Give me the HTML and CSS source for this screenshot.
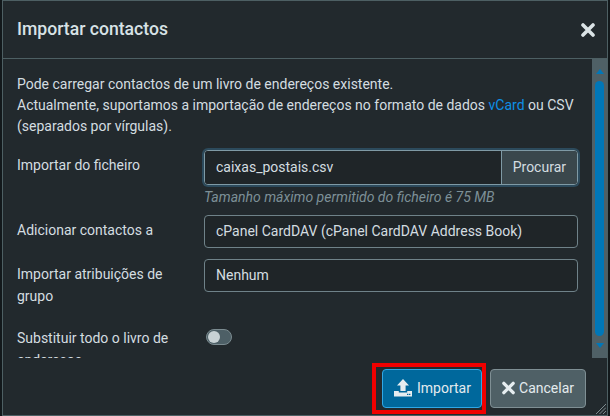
FILE: index.html
```html
<!DOCTYPE html>
<html>
<head>
<meta charset="utf-8">
<title>Importar contactos</title>
<link rel="stylesheet" href="styles.css">
</head>
<body>

<div class="dialog">
    <div class="titlebar">
        <span class="title">Importar contactos</span>
        <svg class="close" width="14" height="14" viewBox="0 0 14 14"><path d="M2 2 L12 12 M12 2 L2 12" stroke="#dbe3e6" stroke-width="3.6" stroke-linecap="round"/></svg>
    </div>

    <div class="middle">
        <div class="content">
            <p class="intro">Pode carregar contactos de um livro de endereços existente.<br>Actualmente, suportamos a importação de endereços no formato de dados <a href="#">vCard</a> ou CSV (separados por vírgulas).</p>

            <div class="row row-file">
                <label>Importar do ficheiro</label>
                <div class="field">
                    <div class="filebox">
                        <span class="filename">caixas_postais.csv</span>
                        <span class="browse">Procurar</span>
                    </div>
                    <div class="hint">Tamanho máximo permitido do ficheiro é 75 MB</div>
                </div>
            </div>

            <div class="row row-book">
                <label>Adicionar contactos a</label>
                <div class="field"><div class="select">cPanel CardDAV (cPanel CardDAV Address Book)</div></div>
            </div>

            <div class="row row-group">
                <label>Importar atribuições de grupo</label>
                <div class="field"><div class="select">Nenhum</div></div>
            </div>

            <div class="row row-replace">
                <label>Substituir todo o livro de endereços</label>
                <div class="field"><span class="toggle"><span class="knob"></span></span></div>
            </div>
        </div>

        <div class="scrollbar">
            <span class="arrow-up"></span>
            <div class="thumb"></div>
            <span class="arrow-down"></span>
        </div>
    </div>

    <div class="footer">
        <div class="highlight">
            <button class="btn btn-primary">
                <svg width="20" height="20" viewBox="0 0 20 20"><path fill="#e6edf0" d="M10 1 L16 7.5 H12.6 V13 H7.4 V7.5 H4 Z"/><path fill="#e6edf0" d="M1 13 H5.8 V14.6 H14.2 V13 H19 V18.5 H1 Z"/><rect x="14" y="15.8" width="1.4" height="1.2" fill="#00689c"/><rect x="16" y="15.8" width="1.4" height="1.2" fill="#00689c"/></svg>
                Importar
            </button>
        </div>
        <button class="btn btn-cancel">
            <svg width="14" height="14" viewBox="0 0 14 14"><path d="M2 2 L12 12 M12 2 L2 12" stroke="#e6edf0" stroke-width="3.6" stroke-linecap="round"/></svg>
            Cancelar
        </button>
        <svg class="grip" width="10" height="10" viewBox="0 0 10 10"><path d="M10 0 L0 10 M10 3.5 L3.5 10 M10 7 L7 10" stroke="#7d8a8e" stroke-width="1"/></svg>
    </div>
</div>

</body>
</html>
```

FILE: styles.css
```css
html, body {
    margin: 0;
    height: 100%;
}

body {
    background: #12181b;
    font: 14px/21px "Roboto", sans-serif;
    color: #d4dde0;
    overflow: hidden;
}

.dialog {
    box-sizing: border-box;
    width: 606px;
    height: 416px;
    margin-left: 2px;
    background: #22292d;
    border: 1px solid #4d5f63;
    display: flex;
    flex-direction: column;
    position: relative;
}

.titlebar {
    flex: none;
    box-sizing: border-box;
    height: 58px;
    padding: 0 12px 0 14px;
    border-bottom: 1px solid #4d5f63;
    display: flex;
    align-items: center;
    justify-content: space-between;
}

.title {
    font-size: 17.6px;
    font-weight: 500;
    color: #d8e2e6;
}

.middle {
    flex: none;
    height: 299px;
    display: flex;
}

.content {
    flex: 1;
    overflow: hidden;
    padding: 15px 14px 0 14px;
}

.intro {
    margin: 0 0 13px;
}

.intro a {
    color: #0d8fe6;
    text-decoration: none;
}

.row {
    display: grid;
    grid-template-columns: 187px 1fr;
}

.row label {
    padding-top: 4px;
    padding-right: 20px;
    line-height: 22px;
}

.row-file {
    margin-bottom: 7px;
}

.row-book {
    margin-bottom: 11px;
}

.row-group {
    margin-bottom: 17px;
}

.row-replace label {
    padding-top: 3px;
}

.filebox {
    box-sizing: border-box;
    height: 35px;
    display: flex;
    border: 1px solid #7f9aa5;
    border-radius: 4px;
    box-shadow: 0 0 0 2px #2c4a5c;
    overflow: hidden;
}

.filename {
    flex: 1;
    padding: 6px 11px;
    background: #1f2528;
}

.browse {
    padding: 6px 11px;
    background: #3a474c;
    border-left: 1px solid #7f9aa5;
}

.hint {
    margin-top: 2px;
    font-style: italic;
    color: #7d9097;
}

.select {
    box-sizing: border-box;
    height: 33px;
    padding: 5px 11px;
    background: #1f2528;
    border: 1px solid #6f8289;
    border-radius: 4px;
}

.toggle {
    display: block;
    box-sizing: border-box;
    width: 26px;
    height: 16px;
    margin: 5px 0 0 2px;
    padding: 1px;
    background: #4d5f66;
    border: 1px solid #7b8b90;
    border-radius: 8px;
}

.knob {
    display: block;
    width: 12px;
    height: 12px;
    background: #c8d2d5;
    border-radius: 50%;
}

.scrollbar {
    flex: none;
    width: 15px;
    background: #4f6066;
    display: flex;
    flex-direction: column;
    align-items: center;
}

.arrow-up {
    margin-top: 10px;
    border: 4px solid transparent;
    border-top: 0;
    border-bottom: 5px solid #0077b8;
}

.thumb {
    width: 9px;
    flex: 1;
    margin: 7px 0;
    background: #0077b8;
    border-radius: 5px;
}

.arrow-down {
    margin-bottom: 10px;
    border: 4px solid transparent;
    border-bottom: 0;
    border-top: 5px solid #0077b8;
}

.footer {
    flex: 1;
    display: flex;
    justify-content: flex-end;
    align-items: center;
    gap: 4px;
    padding: 3px 21px 0 0;
    position: relative;
}

.highlight {
    border: 4px solid #f00000;
    padding: 2px 0 2px 6px;
    display: flex;
}

.btn {
    box-sizing: border-box;
    height: 39px;
    display: flex;
    align-items: center;
    gap: 4px;
    font: 14px "Roboto", sans-serif;
    color: #e4ebee;
    border-radius: 4px;
}

.btn-primary {
    width: 100px;
    padding: 0 10px;
    background: #00689c;
    border: 1px solid #2fa8e6;
}

.btn-cancel {
    width: 96px;
    padding: 0 11px;
    background: #4f6066;
    border: 1px solid #7f8f94;
}

.grip {
    position: absolute;
    right: 1px;
    bottom: 1px;
}
```
